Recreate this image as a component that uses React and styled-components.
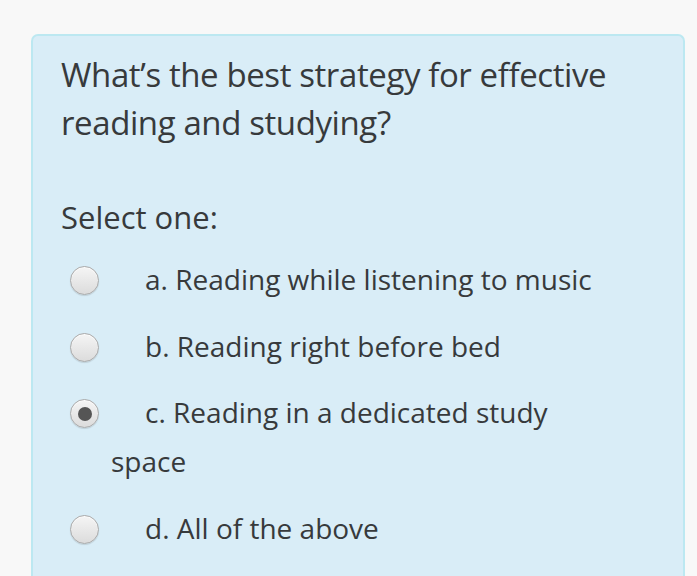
import React from 'react';
import styled, { createGlobalStyle } from 'styled-components';

const GlobalStyle = createGlobalStyle`
  html, body {
    margin: 0;
    padding: 0;
    background: #f8f8f8;
  }
  body {
    font-family: "Open Sans", "Liberation Sans", sans-serif;
    color: #373a3c;
    overflow: hidden;
  }
`;

const Page = styled.div`
  padding: 34px 12px 0 31px;
  height: 576px;
  box-sizing: border-box;
  display: flex;
  flex-direction: column;
`;

const Formulation = styled.div`
  flex: 1;
  background: #d9edf7;
  border: 2px solid #bce8f1;
  border-bottom: none;
  border-radius: 7px 7px 0 0;
  padding: 15px 68px 40px 28px;
`;

const QuestionText = styled.h2`
  margin: 0;
  font-size: 33px;
  font-weight: 400;
  line-height: 48px;
  letter-spacing: -0.4px;
  color: #373a3c;
`;

const Prompt = styled.div`
  margin-top: 46px;
  font-size: 31px;
  line-height: 49px;
  color: #373a3c;
`;

const AnswerList = styled.div`
  margin-top: 13px;
  display: flex;
  flex-direction: column;
  gap: 17.5px;
`;

const AnswerRow = styled.label`
  display: block;
  padding-left: 50px;
  text-indent: -41px;
  font-size: 28px;
  line-height: 49px;
  color: #373a3c;
`;

const Radio = styled.span`
  display: inline-block;
  width: 29px;
  height: 29px;
  box-sizing: border-box;
  border-radius: 50%;
  border: 1px solid #a9a9a9;
  background: linear-gradient(180deg, #f5f5f5 0%, #dcdcdc 100%);
  box-shadow: inset 0 1px 1px rgba(255, 255, 255, 0.8), 0 1px 1px rgba(0, 0, 0, 0.12);
  vertical-align: middle;
  margin-right: 46px;
  position: relative;
  top: -2px;
  text-indent: 0;

  &::after {
    content: '';
    display: ${props => (props.checked ? 'block' : 'none')};
    position: absolute;
    left: 50%;
    top: 50%;
    width: 14px;
    height: 14px;
    margin: -7px 0 0 -7px;
    border-radius: 50%;
    background: #555555;
  }
`;

const answers = [
  { key: 'a', text: 'Reading while listening to music' },
  { key: 'b', text: 'Reading right before bed' },
  { key: 'c', text: 'Reading in a dedicated study space', checked: true },
  { key: 'd', text: 'All of the above' },
];

const App = () => {
  return (
    <Page>
      <GlobalStyle />
      <Formulation>
        <QuestionText>What’s the best strategy for effective reading and studying?</QuestionText>
        <Prompt>Select one:</Prompt>
        <AnswerList>
          {answers.map(answer => (
            <AnswerRow key={answer.key}>
              <Radio checked={answer.checked} />
              {answer.key}. {answer.text}
            </AnswerRow>
          ))}
        </AnswerList>
      </Formulation>
    </Page>
  );
};

export default App;
